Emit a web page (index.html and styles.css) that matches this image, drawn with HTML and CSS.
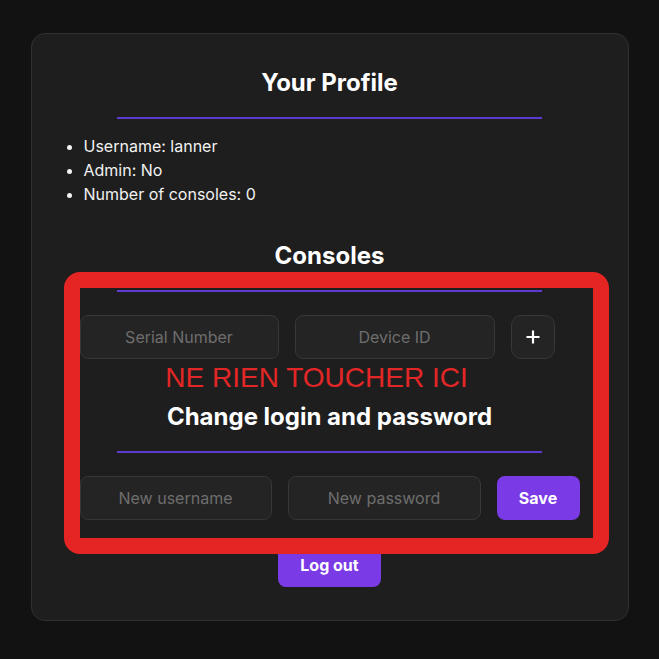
FILE: index.html
```html
<!DOCTYPE html>
<html lang="en">
<head>
<meta charset="utf-8">
<title>Your Profile</title>
<link rel="stylesheet" href="styles.css">
</head>
<body>
<div class="card">
  <h2 class="title">Your Profile</h2>
  <div class="divider"></div>
  <ul class="info">
    <li>Username: lanner</li>
    <li>Admin: No</li>
    <li>Number of consoles: 0</li>
  </ul>
  <h2 class="title title-consoles">Consoles</h2>
  <div class="divider"></div>
  <div class="row row-consoles">
    <input class="field field-serial" type="text" placeholder="Serial Number">
    <input class="field field-device" type="text" placeholder="Device ID">
    <button class="icon-btn" type="button">
      <svg width="16" height="16" viewBox="0 0 16 16"><path d="M8 1.5v13M1.5 8h13" stroke="#fff" stroke-width="2.2" fill="none"/></svg>
    </button>
  </div>
  <p class="warning">NE RIEN TOUCHER ICI</p>
  <h3 class="subtitle">Change login and password</h3>
  <div class="divider"></div>
  <div class="row row-login">
    <input class="field field-user" type="text" placeholder="New username">
    <input class="field field-pass" type="password" placeholder="New password">
    <button class="btn btn-save" type="button">Save</button>
  </div>
  <div class="logout-wrap">
    <button class="btn btn-logout" type="button">Log out</button>
  </div>
  <div class="annotation"></div>
</div>
</body>
</html>
```

FILE: styles.css
```css
* { box-sizing: border-box; }
html, body {
  margin: 0;
  padding: 0;
  background: #121212;
  font-family: Inter, "Noto Sans", sans-serif;
  color: #f5f5f5;
}
body { padding-top: 33px; }

.card {
  position: relative;
  width: 598px;
  margin: 0 auto;
  background: #1e1e1e;
  border: 1px solid #303030;
  border-radius: 14px;
  padding: 34px 48px 33px 48px;
}

.title {
  margin: 0;
  font-size: 24px;
  line-height: 30px;
  font-weight: 700;
  text-align: center;
  color: #ffffff;
}
.title-consoles { margin-top: 35px; }

.divider {
  width: 85%;
  height: 2px;
  background: #5e3ad0;
  margin: 19px auto 0;
}

.info {
  margin: 15px 0 0;
  padding-left: 4px;
  font-size: 16px;
  line-height: 24px;
  color: #f2f2f2;
}

.row {
  display: flex;
  gap: 16px;
  margin-top: 23px;
}

.field {
  height: 44px;
  background: #242424;
  border: 1px solid #373737;
  border-radius: 8px;
  color: #ddd;
  font-family: Inter, "Noto Sans", sans-serif;
  font-size: 16px;
  text-align: center;
  outline: none;
  padding: 0 10px;
}
.field::placeholder { color: #6e6e6e; }
.field-serial { width: 199px; }
.field-device { width: 200px; }
.field-user { width: 192px; }
.field-pass { width: 193px; }

.icon-btn {
  width: 44px;
  height: 44px;
  background: #242424;
  border: 1px solid #373737;
  border-radius: 10px;
  display: flex;
  align-items: center;
  justify-content: center;
  padding: 0;
}

.warning {
  margin: 3px 0 0;
  padding-right: 26px;
  font-family: "Liberation Sans", Arial, sans-serif;
  font-size: 28px;
  line-height: 32px;
  color: #e32626;
  text-align: center;
}

.subtitle {
  margin: 8px 0 0;
  font-size: 24px;
  line-height: 30px;
  font-weight: 700;
  text-align: center;
  color: #ffffff;
}

.btn {
  height: 44px;
  border: 0;
  border-radius: 8px;
  background: #7a3ae6;
  color: #ffffff;
  font-family: Inter, "Noto Sans", sans-serif;
  font-size: 16px;
  font-weight: 700;
}
.btn-save { width: 84px; }

.logout-wrap {
  display: flex;
  justify-content: center;
  margin-top: 23px;
}
.btn-logout { width: 103px; }

.annotation {
  position: absolute;
  left: 32px;
  top: 238px;
  width: 545px;
  height: 282px;
  border: 16px solid #e52424;
  border-radius: 16px;
  pointer-events: none;
}
```
